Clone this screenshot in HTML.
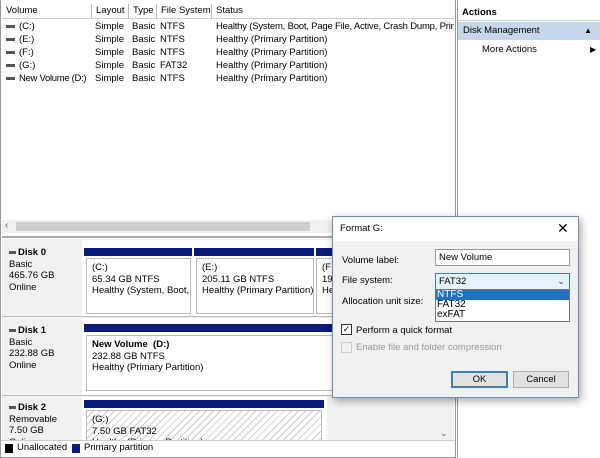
<!DOCTYPE html>
<html><head><style>
*{box-sizing:border-box;margin:0;padding:0}
body{width:600px;height:458px;background:#fff;font-family:"Liberation Sans",sans-serif;font-size:9.5px;color:#000;position:relative;overflow:hidden;white-space:nowrap}
.a{position:absolute}
.hd{top:4px;height:15px;border-right:1px solid #bbb;padding-left:4px;line-height:14px;overflow:hidden}
.row{position:absolute;left:4px;height:13px;line-height:13px;width:450px;overflow:hidden}
.row span{position:absolute;white-space:nowrap}
.ic{display:inline-block;width:9px;height:3px;background:#555;vertical-align:middle;margin-right:4px}
.lab{position:absolute;left:9px;line-height:11.5px}
.bar{position:absolute;background:#0a1a7d;height:8px}
.pt{position:absolute;border:1px solid #bbb;background:#fff;padding:3px 5px;line-height:11.5px;white-space:nowrap;overflow:hidden}
</style></head><body>
<div class="a" style="left:0;top:0;width:456px;height:458px;border:1px solid #999;border-top:none"></div>
<div class="a" style="left:2px;top:4px;width:452px;height:15px;border-bottom:1px solid #ccc"></div>
<div class="a hd" style="left:2px;width:90px">Volume</div>
<div class="a hd" style="left:92px;width:37px">Layout</div>
<div class="a hd" style="left:129px;width:28px">Type</div>
<div class="a hd" style="left:157px;width:55px">File System</div>
<div class="a hd" style="left:212px;width:242px;border-right:none">Status</div>
<div class="row" style="top:20px"><span style="left:2px"><i class="ic"></i>(C:)</span><span style="left:91px">Simple</span><span style="left:128px">Basic</span><span style="left:156px">NTFS</span><span style="left:212px;letter-spacing:-0.2px">Healthy (System, Boot, Page File, Active, Crash Dump, Prin</span></div>
<div class="row" style="top:33px"><span style="left:2px"><i class="ic"></i>(E:)</span><span style="left:91px">Simple</span><span style="left:128px">Basic</span><span style="left:156px">NTFS</span><span style="left:212px">Healthy (Primary Partition)</span></div>
<div class="row" style="top:46px"><span style="left:2px"><i class="ic"></i>(F:)</span><span style="left:91px">Simple</span><span style="left:128px">Basic</span><span style="left:156px">NTFS</span><span style="left:212px">Healthy (Primary Partition)</span></div>
<div class="row" style="top:59px"><span style="left:2px"><i class="ic"></i>(G:)</span><span style="left:91px">Simple</span><span style="left:128px">Basic</span><span style="left:156px">FAT32</span><span style="left:212px">Healthy (Primary Partition)</span></div>
<div class="row" style="top:72px"><span style="left:2px;letter-spacing:-0.3px"><i class="ic"></i>New Volume (D:)</span><span style="left:91px">Simple</span><span style="left:128px">Basic</span><span style="left:156px">NTFS</span><span style="left:212px">Healthy (Primary Partition)</span></div>
<div class="a" style="left:2px;top:220px;width:452px;height:13px;background:#f0f0f0"></div>
<div class="a" style="left:5px;top:220px;font-size:10px;color:#555">&lsaquo;</div>
<div class="a" style="left:16px;top:222px;width:294px;height:9px;background:#cdcdcd"></div>
<div class="a" style="left:2px;top:236px;width:452px;height:2px;background:#aaa"></div>
<div class="a" style="left:2px;top:239px;width:452px;height:201px;background:#f0f0f0"></div>
<div class="a" style="left:2px;top:240px;width:80px;height:77px;background:#f0f0f0;border-bottom:1px solid #bbb"></div>
<div class="lab" style="top:247px"><b><i class="ic" style="width:7px;margin-right:2px"></i>Disk 0</b><br>Basic<br>465.76 GB<br>Online</div>
<div class="a" style="left:82px;top:240px;width:372px;height:77px;background:#fff;border-bottom:1px solid #bbb"></div>
<div class="bar" style="left:84px;top:248px;width:108px"></div>
<div class="bar" style="left:194px;top:248px;width:120px"></div>
<div class="bar" style="left:316px;top:248px;width:20px"></div>
<div class="pt" style="left:86px;top:258px;width:105px;height:56px">(C:)<br>65.34 GB NTFS<br>Healthy (System, Boot, F</div>
<div class="pt" style="left:196px;top:258px;width:118px;height:56px">(E:)<br>205.11 GB NTFS<br>Healthy (Primary Partition)</div>
<div class="pt" style="left:316px;top:258px;width:20px;height:56px">(F<br>19<br>He</div>
<div class="lab" style="top:325px"><b><i class="ic" style="width:7px;margin-right:2px"></i>Disk 1</b><br>Basic<br>232.88 GB<br>Online</div>
<div class="a" style="left:2px;top:395px;width:452px;height:1px;background:#bbb"></div>
<div class="a" style="left:82px;top:318px;width:372px;height:77px;background:#fff"></div>
<div class="bar" style="left:84px;top:324px;width:250px"></div>
<div class="pt" style="left:86px;top:335px;width:250px;height:56px"><b>New Volume&nbsp; (D:)</b><br>232.88 GB NTFS<br>Healthy (Primary Partition)</div>
<div class="lab" style="top:402px"><b><i class="ic" style="width:7px;margin-right:2px"></i>Disk 2</b><br>Removable<br>7.50 GB<br>Online</div>
<div class="a" style="left:82px;top:397px;width:245px;height:43px;background:#fff"></div>
<div class="bar" style="left:84px;top:400px;width:240px"></div>
<div class="pt" style="left:86px;top:410px;width:236px;height:40px;background:repeating-linear-gradient(135deg,#fff 0 4px,#ccc 4px 5px)">(G:)<br>7.50 GB FAT32<br>Healthy (Primary Partition)</div>
<div class="a" style="left:440px;top:428px;color:#666;font-size:9px">&#8964;</div>
<div class="a" style="left:1px;top:440px;width:454px;height:17px;background:#fff;border-top:1px solid #ccc"></div>
<div class="a" style="left:5px;top:444px;width:8px;height:9px;background:#000"></div>
<div class="a" style="left:17px;top:442px">Unallocated</div>
<div class="a" style="left:72px;top:444px;width:8px;height:9px;background:#0a1a7d"></div>
<div class="a" style="left:84px;top:442px">Primary partition</div>
<div class="a" style="left:457px;top:0;width:143px;height:458px;border-left:1px solid #999;background:#fff"></div>
<div class="a" style="left:458px;top:4px;width:142px;height:17px;border-bottom:1px solid #ccc;padding-left:4px;line-height:17px;font-weight:bold">Actions</div>
<div class="a" style="left:458px;top:22px;width:142px;height:18px;background:#c5d7ea;padding-left:5px;line-height:18px">Disk Management<span style="position:absolute;right:8px;font-size:8px">&#9650;</span></div>
<div class="a" style="left:482px;top:43px;line-height:13px">More Actions</div>
<div class="a" style="left:590px;top:43px;font-size:8px;line-height:13px">&#9654;</div>
<div class="a" style="left:332px;top:216px;width:247px;height:182px;background:#f0f0f0;border:1px solid #6b8fb5;box-shadow:2px 3px 8px rgba(0,0,0,.35)">
<div class="a" style="left:0;top:0;width:245px;height:24px;background:#fff;padding:6px 7px">Format G:</div>
<div class="a" style="left:224px;top:3px;font-size:14px">&#10005;</div>
<div class="a" style="left:9px;top:38px">Volume label:</div>
<div class="a" style="left:102px;top:32px;width:135px;height:17px;background:#fff;border:1px solid #999;padding:2px 3px">New Volume</div>
<div class="a" style="left:9px;top:58px">File system:</div>
<div class="a" style="left:102px;top:56px;width:135px;height:17px;background:#e5f1fb;border:1px solid #3c7fb1;padding:2px 3px">FAT32<span style="position:absolute;right:4px;color:#555">&#8964;</span></div>
<div class="a" style="left:102px;top:72px;width:135px;height:33px;background:#fff;border:1px solid #777;line-height:10px;font-size:10px">
<div style="background:#1d72c6;color:#fff;padding-left:1px">NTFS</div><div style="padding-left:1px">FAT32</div><div style="padding-left:1px">exFAT</div></div>
<div class="a" style="left:9px;top:79px">Allocation unit size:</div>
<div class="a" style="left:8px;top:107px;width:11px;height:11px;border:1px solid #333;background:#fff;font-size:9px;line-height:9px;text-align:center">&#10003;</div>
<div class="a" style="left:23px;top:108px">Perform a quick format</div>
<div class="a" style="left:8px;top:125px;width:11px;height:11px;border:1px solid #ccc"></div>
<div class="a" style="left:23px;top:125px;color:#999">Enable file and folder compression</div>
<div class="a" style="left:118px;top:154px;width:57px;height:17px;border:2px solid #3c7fb1;background:#e1e1e1;text-align:center;line-height:13px">OK</div>
<div class="a" style="left:180px;top:154px;width:56px;height:17px;border:1px solid #adadad;background:#e1e1e1;text-align:center;line-height:15px">Cancel</div>
</div>
</body></html>
